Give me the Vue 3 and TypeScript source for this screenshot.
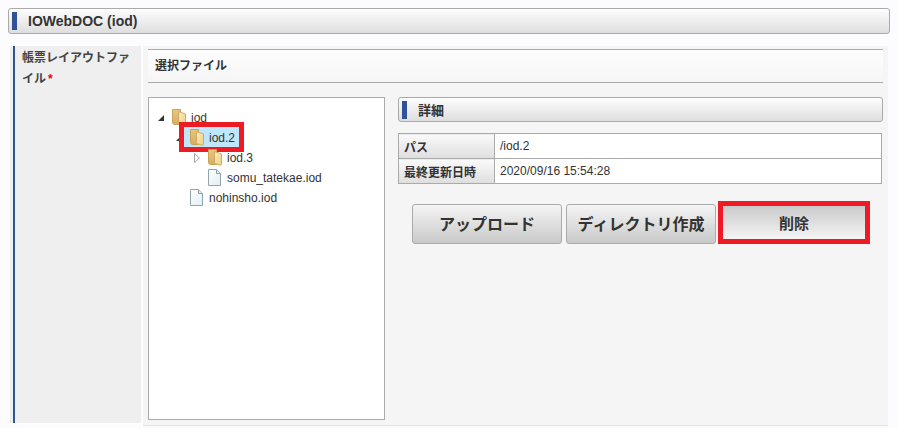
<script setup lang="ts">
interface Node { label: string; level: number; kind: 'folder' | 'file'; arrow?: 'open' | 'closed'; selected?: boolean }
const nodes: Node[] = [
  { label: 'iod', level: 0, kind: 'folder', arrow: 'open' },
  { label: 'iod.2', level: 1, kind: 'folder', arrow: 'open', selected: true },
  { label: 'iod.3', level: 2, kind: 'folder', arrow: 'closed' },
  { label: 'somu_tatekae.iod', level: 2, kind: 'file' },
  { label: 'nohinsho.iod', level: 1, kind: 'file' },
]
const rows = [
  { k: 'パス', v: '/iod.2' },
  { k: '最終更新日時', v: '2020/09/16 15:54:28' },
]
</script>

<template>
  <div class="page">
    <div class="bar title"><i class="mark"></i><span>IOWebDOC (iod)</span></div>
    <div class="form">
      <div class="label">
        <div class="label-text">帳票レイアウトファ<br />イル<span class="req">*</span></div>
      </div>
      <div class="content">
        <div class="subhead">選択ファイル</div>
        <div class="panes">
          <div class="tree">
            <svg width="0" height="0" class="defs">
              <defs>
                <linearGradient id="flap" x1="0" y1="0" x2="1" y2="1">
                  <stop offset="0" stop-color="#fbeec4" />
                  <stop offset="1" stop-color="#efcf85" />
                </linearGradient>
                <linearGradient id="back" x1="0" y1="0" x2="0" y2="1">
                  <stop offset="0" stop-color="#e9c780" />
                  <stop offset="1" stop-color="#d8ae60" />
                </linearGradient>
                <linearGradient id="sheet" x1="0" y1="0" x2="1" y2="1">
                  <stop offset="0" stop-color="#ffffff" />
                  <stop offset="1" stop-color="#e3eef2" />
                </linearGradient>
              </defs>
            </svg>
            <div v-for="n in nodes" :key="n.label" class="row" :style="{ paddingLeft: n.level * 18 + 'px' }">
              <span class="arrow">
                <svg v-if="n.arrow === 'open'" width="8" height="8" viewBox="0 0 8 8"><path d="M7 1V7H1Z" fill="#333" /></svg>
                <svg v-else-if="n.arrow === 'closed'" width="8" height="10" viewBox="0 0 8 10"><path d="M1.5 .5L6.5 5L1.5 9.5Z" fill="#fff" stroke="#a5a5a5" /></svg>
              </span>
              <span class="node">
                <span v-if="n.selected" class="tree-hl"></span>
                <svg v-if="n.kind === 'folder'" class="icon" width="14" height="17" viewBox="0 0 14 17">
                  <path d="M.5 .5H8.5L9 15.5H3Q.5 15.5 .5 13Z" fill="url(#back)" stroke="#c9a256" />
                  <path d="M6.5 2.5L13.5 5V15.5Q13.5 16.5 12 16L6.5 14.5Z" fill="url(#flap)" stroke="#d3ab60" />
                </svg>
                <svg v-else class="icon" width="14" height="17" viewBox="0 0 14 17">
                  <path d="M.5 .5H8.5L12.5 4.5V16.5H.5Z" fill="url(#sheet)" stroke="#8fa4ab" />
                  <path d="M8.5 .5V4.5H12.5" fill="#dbe8ec" stroke="#8fa4ab" />
                </svg>
                <span class="name">{{ n.label }}</span>
              </span>
            </div>
          </div>
          <div class="detail">
            <div class="bar sub"><i class="mark"></i><span>詳細</span></div>
            <table class="info">
              <tbody>
                <tr v-for="r in rows" :key="r.k">
                  <th>{{ r.k }}</th>
                  <td>{{ r.v }}</td>
                </tr>
              </tbody>
            </table>
            <div class="actions">
              <button class="btn">アップロード</button>
              <button class="btn">ディレクトリ作成</button>
              <button class="btn del">削除</button>
            </div>
          </div>
        </div>
      </div>
    </div>
  </div>
</template>

<style>
html, body { background: #fcfcfe; }
</style>

<style scoped>
.page {
  width: 898px;
  height: 428px;
  box-sizing: border-box;
  padding: 8px 8px 0;
  font-family: "Liberation Sans", "Noto Sans CJK JP", sans-serif;
  color: #333;
  overflow: hidden;
}
.bar {
  display: flex;
  align-items: center;
  box-sizing: border-box;
  border: 1px solid #aaa;
  border-radius: 3px;
  background: linear-gradient(#fdfdfd, #dedede);
  font-weight: bold;
}
.mark {
  display: block;
  width: 5px;
  height: 18px;
  background: #2f5496;
  margin: 0 10px 0 3px;
}
.title {
  width: 882px;
  height: 26px;
  font-size: 14px;
}
.title .mark { margin-right: 11px; }
.form {
  display: flex;
  margin: 12px 0 0 2px;
  height: 380px;
  gap: 2px;
}
.label {
  width: 131px;
  height: 378px;
  box-sizing: border-box;
  background: #efefef;
  padding: 0 0 0 3px;
  border-bottom: 1px solid #fff;
}
.label-text {
  height: 100%;
  box-sizing: border-box;
  border-left: 2px solid #2f5496;
  padding: 2px 5px 0 7px;
  font-size: 12px;
  line-height: 21px;
  font-weight: bold;
  color: #444;
}
.req {
  margin-left: 2px;
  color: #e60012;
  font-size: 12px;
}
.content {
  width: 745px;
  box-sizing: border-box;
  background: #f5f5f5;
  border-bottom: 1px solid #e2e2e2;
  padding: 3px 5px 0;
}
.subhead {
  width: 735px;
  height: 34px;
  box-sizing: border-box;
  border-top: 1px solid #aaa;
  border-bottom: 1px solid #aaa;
  background: linear-gradient(#fdfdfd, #f6f6f6);
  padding-left: 7px;
  font-size: 12px;
  font-weight: bold;
  line-height: 33px;
}
.panes {
  display: flex;
  margin-top: 14px;
  gap: 13px;
}
.tree {
  width: 237px;
  height: 323px;
  box-sizing: border-box;
  border: 1px solid #aaa;
  background: #fff;
  padding: 10px 0 0 9px;
  font-size: 12px;
  color: #333;
}
.defs { position: absolute; }
.row {
  display: flex;
  align-items: center;
  height: 20px;
}
.arrow {
  display: flex;
  align-items: center;
  justify-content: center;
  width: 9px;
  margin: 0 6px 0 -2px;
  flex: none;
}
.node {
  position: relative;
  z-index: 0;
  display: flex;
  align-items: center;
  height: 20px;
  margin-left: 1px;
}
.icon { margin: 0 5px 2px 0; flex: none; }
.tree-hl {
  position: absolute;
  z-index: -1;
  left: -11px;
  top: -6px;
  right: -9px;
  bottom: -4px;
  box-sizing: border-box;
  border: 5px solid #ed1c24;
  background: #bfe6fb;
}
.detail { width: 485px; }
.sub {
  height: 25px;
  font-size: 13px;
}
.sub .mark { height: 18px; margin: 0 11px 0 3px; }
.info {
  margin-top: 11px;
  width: 484px;
  border-collapse: collapse;
  font-size: 12px;
}
.info th, .info td {
  border: 1px solid #aaa;
  height: 24px;
  padding: 0 5px;
  text-align: left;
}
.info th {
  width: 85px;
  background: linear-gradient(#fafafa, #dedede);
  font-weight: bold;
  font-size: 12px;
}
.info td { background: #fff; padding-left: 5px; }
.actions {
  display: flex;
  margin: 17px 0 0 14px;
  gap: 4px;
  align-items: flex-end;
}
.btn {
  width: 150px;
  height: 40px;
  box-sizing: border-box;
  border: 1px solid #aaa;
  border-radius: 3px;
  background: linear-gradient(#f5f5f5, #c9c9c9);
  font-family: inherit;
  font-size: 16px;
  font-weight: bold;
  color: #333;
  padding: 0 0 2px;
}
.del {
  width: 152px;
  height: 43px;
  margin-left: -2px;
  border: 5px solid #ed1c24;
  border-radius: 0;
  background: linear-gradient(#c9c9c9, #f5f5f5);
  font-size: 15px;
  padding: 0;
}
</style>
